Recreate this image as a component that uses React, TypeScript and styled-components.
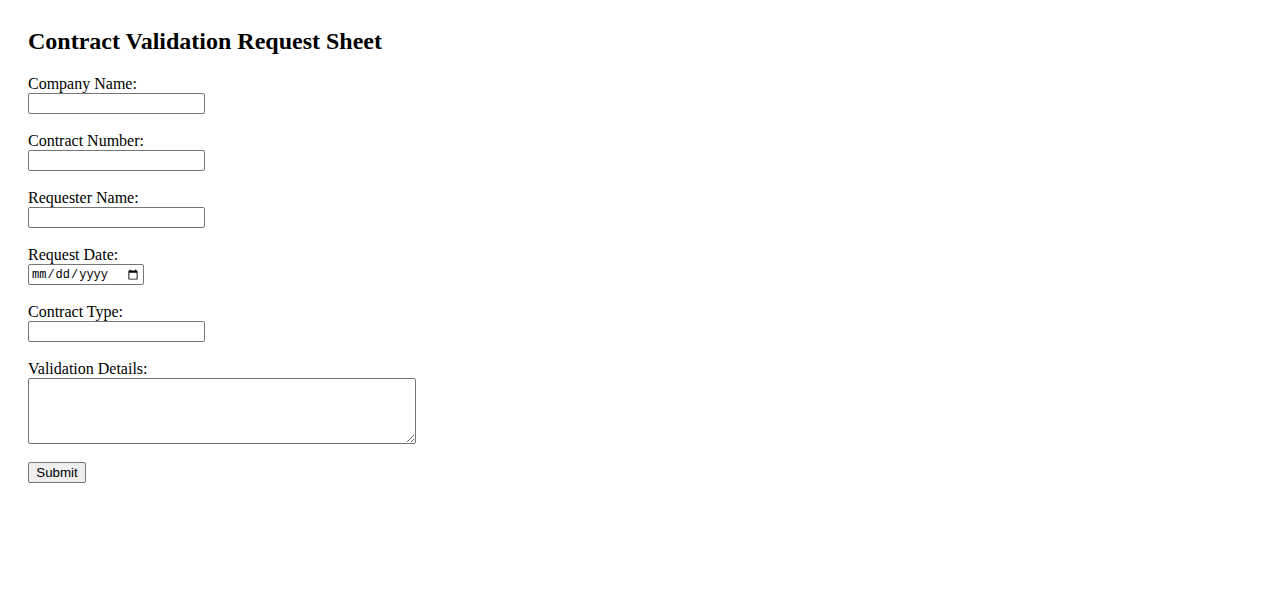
import React from "react";
import styled, { createGlobalStyle } from "styled-components";

const GlobalStyle = createGlobalStyle`
  html, body { margin: 0; padding: 0; background: #ffffff; }
  body { font-family: "Liberation Serif", "Times New Roman", serif; color: #000; }
`;

const Page = styled.div`
  padding: 27px 28px 28px;
`;

const Title = styled.h2`
  margin: 0 0 20px 0;
  font-size: 24px;
  font-weight: bold;
  line-height: 28px;
  font-family: "Liberation Serif", "Times New Roman", serif;
`;

const Form = styled.form`
  display: flex;
  flex-direction: column;
  align-items: flex-start;
  gap: 18px;
`;

const Field = styled.div`
  display: flex;
  flex-direction: column;
  align-items: flex-start;
`;

const Label = styled.label`
  font-size: 16px;
  line-height: 18px;
`;

const TextInput = styled.input<{ $w?: number }>`
  box-sizing: border-box;
  width: ${(p) => p.$w ?? 177}px;
  height: 21px;
  margin: 0;
  padding: 1px 2px;
  border: 1px solid #767676;
  border-radius: 2px;
  background: #fff;
  font-family: "Liberation Sans", Arial, sans-serif;
  font-size: 13.33px;
`;

const DateInput = styled(TextInput)`
  font-family: "Liberation Mono", "Courier New", monospace;
  font-size: 12px;
  color: #000;
`;

const TextArea = styled.textarea`
  box-sizing: border-box;
  width: 388px;
  height: 66px;
  margin: 0;
  padding: 2px;
  border: 1px solid #767676;
  border-radius: 2px;
  font-family: "Liberation Mono", monospace;
  font-size: 13.33px;
`;

const Button = styled.button`
  box-sizing: border-box;
  width: 58px;
  height: 21px;
  margin: 0;
  padding: 1px 6px;
  border: 1px solid #767676;
  border-radius: 2px;
  background: #efefef;
  color: #000;
  font-family: "Liberation Sans", Arial, sans-serif;
  font-size: 13.33px;
  line-height: 15px;
`;

const fields = [
  { id: "company", label: "Company Name:" },
  { id: "contract", label: "Contract Number:" },
  { id: "requester", label: "Requester Name:" },
];

export default function App() {
  return (
    <>
      <GlobalStyle />
      <Page>
        <Title>Contract Validation Request Sheet</Title>
        <Form onSubmit={(e) => e.preventDefault()}>
          {fields.map((f) => (
            <Field key={f.id}>
              <Label htmlFor={f.id}>{f.label}</Label>
              <TextInput id={f.id} type="text" />
            </Field>
          ))}
          <Field>
            <Label htmlFor="date">Request Date:</Label>
            <DateInput id="date" type="date" $w={116} />
          </Field>
          <Field>
            <Label htmlFor="type">Contract Type:</Label>
            <TextInput id="type" type="text" />
          </Field>
          <Field>
            <Label htmlFor="details">Validation Details:</Label>
            <TextArea id="details" />
          </Field>
          <Button type="submit">Submit</Button>
        </Form>
      </Page>
    </>
  );
}
